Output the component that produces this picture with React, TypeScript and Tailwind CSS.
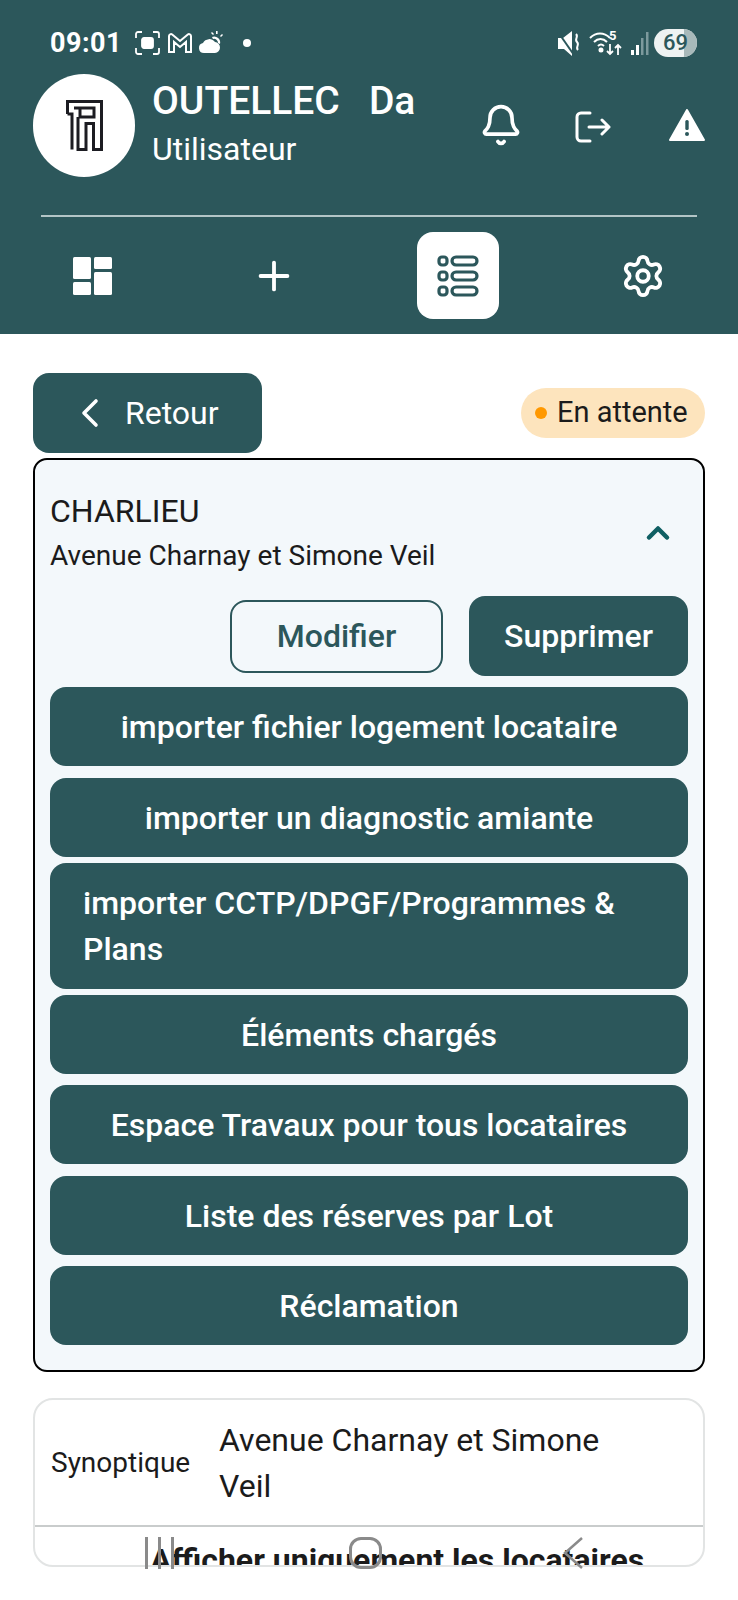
import { Bell, ChevronLeft, ChevronUp, Plus, Settings } from 'lucide-react';

const font = { fontFamily: 'Roboto, "Noto Sans", sans-serif' };

// Boutons pleine largeur de la carte
const actions = [
  { label: 'importer fichier logement locataire', className: 'mt-[11px] h-[79px] justify-center text-center' },
  { label: 'importer un diagnostic amiante', className: 'mt-[12px] h-[79px] justify-center text-center' },
  { label: 'importer CCTP/DPGF/Programmes & Plans', className: 'mt-[6px] h-[126px] text-left px-[33px]' },
  { label: 'Éléments chargés', className: 'mt-[6px] h-[79px] justify-center text-center' },
  { label: 'Espace Travaux pour tous locataires', className: 'mt-[11px] h-[79px] justify-center text-center' },
  { label: 'Liste des réserves par Lot', className: 'mt-[12px] h-[79px] justify-center text-center' },
  { label: 'Réclamation', className: 'mt-[11px] h-[79px] justify-center text-center' },
];

function StatusBar() {
  return (
    <div className="flex h-[30px] items-center pl-[50px] pr-[41px]">
      <span className="text-[27px] font-bold leading-none tracking-[0.5px] text-white">09:01</span>
      {/* capture */}
      <svg className="ml-[13px]" width="25" height="24" viewBox="0 0 25 24" fill="none" stroke="white" strokeWidth="1.8">
        <path d="M1 7V3a2 2 0 0 1 2-2h4M18 1h4a2 2 0 0 1 2 2v4M24 17v4a2 2 0 0 1-2 2h-4M7 23H3a2 2 0 0 1-2-2v-4" />
        <rect x="7" y="7" width="11" height="10" rx="2" fill="white" />
      </svg>
      {/* gmail */}
      <svg className="ml-[7px]" width="26" height="22" viewBox="0 0 26 22" fill="none" stroke="white" strokeWidth="2">
        <path d="M2 20V4a2 2 0 0 1 3.2-1.5L13 9l7.8-6.5A2 2 0 0 1 24 4v16h-5V10l-6 5-6-5v10z" />
      </svg>
      {/* meteo */}
      <svg className="ml-[5px]" width="26" height="24" viewBox="0 0 26 24" fill="white">
        <path d="M6 22a5 5 0 0 1-1-9.9A7 7 0 0 1 17 11a5.5 5.5 0 0 1 5 5.5A5.5 5.5 0 0 1 17 22z" />
        <path d="M14 6a6 6 0 0 1 8 7l-2-1a4 4 0 0 0-5-4z" />
        <path d="M18 0h1.6v3H18zM24 3l1 1-2 2-1-1zM13 2l1-1 2 2-1 1z" />
      </svg>
      <span className="ml-[19px] h-[8px] w-[8px] rounded-full bg-white" />
      <div className="flex-1" />
      {/* muet */}
      <svg width="24" height="27" viewBox="0 0 24 27" fill="white">
        <path d="M1 8h5l9-7v25L7 19H1z" />
        <path d="M1 2l16 23" stroke="#2c575b" strokeWidth="2" />
        <path d="M19 4c3 3-2 5 1 8s-2 5 1 8" fill="none" stroke="white" strokeWidth="2" />
      </svg>
      {/* wifi */}
      <svg className="ml-[8px]" width="37" height="28" viewBox="0 0 37 28" fill="none" stroke="white" strokeWidth="2">
        <path d="M1 9c6-6 14-6 20 0M5 13c4-4 9-4 13 0M9 17c2-2 4-2 6 0" />
        <circle cx="12" cy="21" r="1.5" fill="white" />
        <path d="M21 15v10m-3-3 3 3 3-3M29 26V16m-3 3 3-3 3 3" strokeWidth="1.8" />
        <text x="20" y="11" fill="white" stroke="none" fontSize="13" fontWeight="700" fontFamily="Roboto, sans-serif">5</text>
      </svg>
      {/* reseau */}
      <svg className="ml-[5px]" width="18" height="28" viewBox="0 0 18 28">
        <rect x="0" y="21" width="3" height="5" fill="white" />
        <rect x="5" y="16" width="3" height="10" fill="white" />
        <rect x="10" y="9" width="2.5" height="17" fill="#7d9a9d" />
        <rect x="15" y="3" width="2.5" height="23" fill="#7d9a9d" />
      </svg>
      <div className="relative ml-[5px] flex h-[28px] w-[43px] items-center justify-center overflow-hidden rounded-full bg-[#eef2f2]">
        <div className="absolute inset-y-0 right-0 w-[13px] bg-[#a8b9ba]" />
        <span className="relative text-[22px] font-medium leading-none text-[#2c575b]">69</span>
      </div>
    </div>
  );
}

function Logo() {
  return (
    <svg width="37" height="51" viewBox="0 0 37 51" fill="none" stroke="#1c1c22" strokeWidth="3">
      <path d="M1.5 14V1.5h34V49.5h-8V23.5H20V49.5h-8V17" />
      <path d="M1.5 14H6V49.5" />
      <path d="M8 8H28V17H19" />
      <path d="M14 8V17H19M17 30h0" />
    </svg>
  );
}

function Header() {
  return (
    <header className="bg-[#2c575b] pb-[15px] pt-[28px] text-white">
      <StatusBar />
      <div className="mt-[16px] flex h-[103px] pl-[33px]">
        <div className="flex h-[103px] w-[102px] shrink-0 items-center justify-center rounded-full bg-white">
          <Logo />
        </div>
        <div className="ml-[17px] w-[310px] shrink-0 pt-[4px]">
          <div className="whitespace-pre text-[39px] font-medium leading-[46px]">OUTELLEC{'   '}Da</div>
          <div className="mt-[2px] text-[32px] leading-[46px]">Utilisateur</div>
        </div>
        <Bell className="ml-[17px] mt-[29px] h-[44px] w-[44px]" strokeWidth={2} />
        {/* sortie */}
        <svg className="ml-[52px] mt-[37px]" width="36" height="32" viewBox="0 0 36 32" fill="none" stroke="white" strokeWidth="3" strokeLinecap="round" strokeLinejoin="round">
          <path d="M15 2H6a4 4 0 0 0-4 4v20a4 4 0 0 0 4 4h9" />
          <path d="M14 16h20M27 9l7 7-7 7" />
        </svg>
        {/* alerte */}
        <svg className="ml-[58px] mt-[35px]" width="36" height="32" viewBox="0 0 36 32">
          <path d="M18 1 35 31H1z" fill="white" stroke="white" strokeWidth="2" strokeLinejoin="round" />
          <rect x="16.3" y="11" width="3.4" height="10" rx="1.5" fill="#2c575b" />
          <circle cx="18" cy="25" r="2" fill="#2c575b" />
        </svg>
      </div>
      <div className="ml-[41px] mt-[38px] h-[2px] w-[656px] bg-[#b3c5c6]" />
      <nav className="mt-[15px] flex h-[87px] items-center pl-[73px]">
        <svg width="39" height="38" viewBox="0 0 39 38" fill="white">
          <rect x="0" y="0" width="18" height="22" rx="1.5" />
          <rect x="21" y="0" width="18" height="12" rx="1.5" />
          <rect x="21" y="15" width="18" height="23" rx="1.5" />
          <rect x="0" y="25" width="18" height="13" rx="1.5" />
        </svg>
        <Plus className="ml-[139px] h-[46px] w-[46px]" strokeWidth={2} />
        <div className="ml-[120px] flex h-[87px] w-[82px] items-center justify-center rounded-[16px] bg-white">
          <svg width="42" height="42" viewBox="0 0 42 42" fill="none" stroke="#2c575b" strokeWidth="3.2">
            <rect x="2" y="2" width="8" height="8" rx="3" />
            <rect x="2" y="17" width="8" height="8" rx="3" />
            <rect x="2" y="32" width="8" height="8" rx="3" />
            <rect x="15" y="2" width="25" height="8" rx="4" />
            <rect x="15" y="17" width="25" height="8" rx="4" />
            <rect x="15" y="32" width="25" height="8" rx="4" />
          </svg>
        </div>
        <Settings className="ml-[121px] h-[46px] w-[46px]" strokeWidth={2} />
      </nav>
    </header>
  );
}

export default function App() {
  return (
    <div className="relative h-[1600px] w-[738px] overflow-hidden bg-white" style={font}>
      <Header />

      <main className="px-[33px]">
        <div className="mt-[39px] flex h-[80px] items-center justify-between">
          <button className="flex h-[80px] w-[229px] items-center rounded-[16px] bg-[#2c575b] pl-[33px] text-white">
            <ChevronLeft className="h-[48px] w-[48px] shrink-0" strokeWidth={1.8} />
            <span className="ml-[11px] text-[32px]">Retour</span>
          </button>
          <div className="flex h-[50px] w-[184px] items-center rounded-full bg-[#fde4bd] pl-[14px] text-[#1b1b1b]">
            <span className="h-[12px] w-[12px] rounded-full bg-[#ff9800]" />
            <span className="ml-[10px] text-[29px]">En attente</span>
          </div>
        </div>

        {/* Carte du site */}
        <section className="mt-[5px] h-[914px] rounded-[14px] border-2 border-black bg-[#f3f8fb] px-[15px]">
          <div className="flex items-center justify-between pr-[12px] pt-[28px]">
            <div>
              <div className="text-[32px] leading-[46px] text-[#1b1b1b]">CHARLIEU</div>
              <div className="text-[28px] leading-[44px] text-[#1b1b1b]">Avenue Charnay et Simone Veil</div>
            </div>
            <ChevronUp className="h-[36px] w-[36px] text-[#0f5f63]" strokeWidth={3} />
          </div>
          <div className="mt-[18px] flex h-[80px] items-center justify-end">
            <button className="h-[73px] w-[213px] rounded-[16px] border-2 border-[#2c575b] text-[32px] font-medium text-[#2c575b]">Modifier</button>
            <button className="ml-[26px] h-[80px] w-[219px] rounded-[16px] bg-[#2c575b] text-[32px] font-medium text-white">Supprimer</button>
          </div>
          {actions.map((a) => (
            <button key={a.label} className={`flex w-full items-center rounded-[16px] bg-[#2c575b] text-[32px] font-medium leading-[46px] text-white ${a.className}`}>
              {a.label}
            </button>
          ))}
        </section>

        {/* Synoptique */}
        <section className="mt-[26px] h-[169px] overflow-hidden rounded-[20px] border-2 border-[#e2e4e4]">
          <div className="flex h-[127px] items-center border-b-2 border-[#c9cccc] pl-[16px]">
            <div className="w-[168px] shrink-0 text-[28px] text-[#1b1b1b]">Synoptique</div>
            <div className="w-[440px] text-[32px] leading-[46px] text-[#1b1b1b]">Avenue Charnay et Simone Veil</div>
          </div>
          <div className="whitespace-nowrap pl-[115px] pt-[10px] text-[32px] font-bold leading-[46px] text-[#1b1b1b]">Afficher uniquement les locataires</div>
        </section>
      </main>

      {/* Barre de navigation Android par-dessus le contenu */}
      <div className="absolute left-0 top-[1537px] h-[32px] w-full">
        <div className="absolute left-[145px] top-0 flex gap-[10px]">
          <span className="h-[32px] w-[3px] bg-[#8a8a8a]" />
          <span className="h-[32px] w-[3px] bg-[#8a8a8a]" />
          <span className="h-[32px] w-[3px] bg-[#8a8a8a]" />
        </div>
        <div className="absolute left-[349px] top-0 h-[32px] w-[33px] rounded-[12px] border-[3px] border-[#8a8a8a]" />
        <svg className="absolute left-[562px] top-0" width="22" height="32" viewBox="0 0 22 32" fill="none" stroke="#8a8a8a" strokeWidth="2.5">
          <path d="M20 1 3 16l17 15" />
        </svg>
      </div>
    </div>
  );
}
